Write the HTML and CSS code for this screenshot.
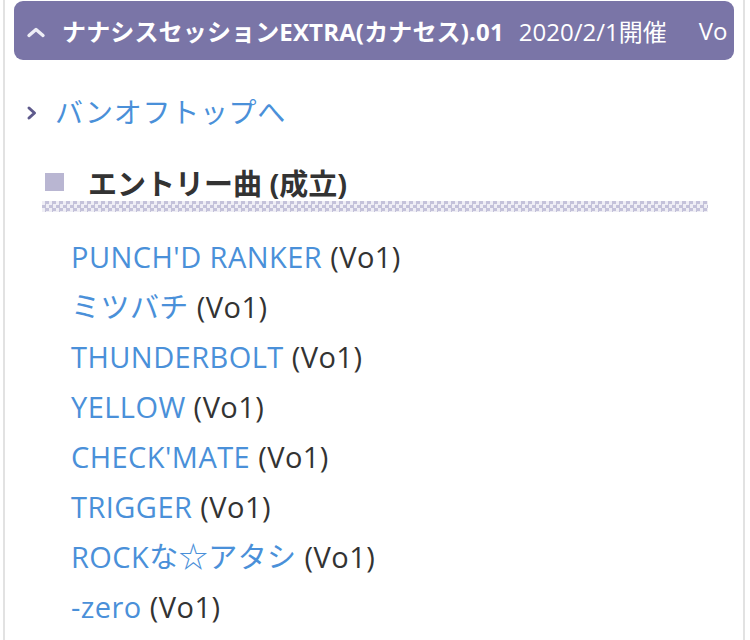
FILE: index.html
```html
<!DOCTYPE html>
<html lang="ja">
<head>
<meta charset="utf-8">
<link rel="stylesheet" href="styles.css">
</head>
<body>
<div class="page">
  <div class="bar">
    <svg class="up" width="20" height="12" viewBox="0 0 20 12"><path d="M3 9.5 L10 3.5 L17 9.5" fill="none" stroke="#eeeef6" stroke-width="3.4" stroke-linecap="round" stroke-linejoin="round"/></svg>
    <span class="bar-title">ナナシスセッションEXTRA(カナセス).01</span>
    <span class="bar-date">2020/2/1開催</span>
    <span class="bar-vo">Vo</span>
  </div>
  <div class="back">
    <svg class="right" width="12" height="16" viewBox="0 0 12 16"><path d="M3 3 L8.5 8 L3 13" fill="none" stroke="#5e5a8c" stroke-width="3" stroke-linecap="round" stroke-linejoin="round"/></svg>
    <a href="#">バンオフトップへ</a>
  </div>
  <div class="section">
    <h2 class="heading"><span class="sq"></span>エントリー曲 (成立)</h2>
    <div class="rule"></div>
    <ul class="songs">
      <li><a href="#">PUNCH'D RANKER</a> (Vo1)</li>
      <li><a href="#">ミツバチ</a> (Vo1)</li>
      <li><a href="#">THUNDERBOLT</a> (Vo1)</li>
      <li><a href="#">YELLOW</a> (Vo1)</li>
      <li><a href="#">CHECK'MATE</a> (Vo1)</li>
      <li><a href="#">TRIGGER</a> (Vo1)</li>
      <li><a href="#">ROCKな☆アタシ</a> (Vo1)</li>
      <li><a href="#">-zero</a> (Vo1)</li>
    </ul>
  </div>
</div>
</body>
</html>
```
FILE: styles.css
```css
html, body {
  margin: 0;
  padding: 0;
  background: #ffffff;
}
body {
  font-family: "Open Sans", "Noto Sans CJK JP", sans-serif;
  color: #333333;
  width: 750px;
  height: 640px;
  overflow: hidden;
}
.page {
  margin-left: 3px;
  width: 742px;
  height: 640px;
  border-left: 2px solid #e2e2e2;
  border-right: 2px solid #e2e2e2;
  box-sizing: border-box;
  padding: 1px 9px 0 9px;
}
.bar {
  height: 59px;
  background: #7a75a7;
  border-radius: 9px;
  display: flex;
  align-items: center;
  white-space: nowrap;
  overflow: hidden;
  color: #ffffff;
  padding-left: 12px;
}
.up {
  flex: none;
  margin-right: 16px;
  margin-top: 2px;
}
.bar-title {
  font-weight: 700;
  font-size: 24px;
  letter-spacing: 0.15px;
}
.bar-date {
  font-size: 24px;
  margin-left: 15px;
}
.bar-vo {
  font-size: 24px;
  margin-left: 32px;
}
.back {
  display: flex;
  align-items: center;
  margin-top: 34px;
  padding-left: 12px;
  height: 34px;
}
.right {
  flex: none;
  margin-right: 17px;
  margin-top: 3px;
}
.back a {
  color: #4a90d9;
  text-decoration: none;
  font-size: 28px;
  letter-spacing: 0.7px;
}
.section {
  padding-left: 28px;
  padding-right: 26px;
  margin-top: 36px;
}
.heading {
  margin: 0;
  font-size: 29px;
  font-weight: 700;
  color: #333333;
  display: flex;
  align-items: center;
  height: 36px;
}
.sq {
  width: 19px;
  height: 18px;
  background: #b9b6d2;
  margin-left: 3px;
  margin-right: 24px;
  flex: none;
}
.rule {
  margin-top: 1px;
  height: 11px;
  background-image: conic-gradient(#c4c2da 25%, #efeef5 0 50%, #c4c2da 0 75%, #efeef5 0);
  background-size: 7px 7px;
}
.songs {
  list-style: none;
  margin: 0;
  padding: 20px 0 0 29px;
}
.songs li {
  font-size: 29px;
  line-height: 50px;
  height: 50px;
  color: #333333;
  letter-spacing: 0.45px;
}
.songs a {
  color: #4a90d9;
  text-decoration: none;
}
```
